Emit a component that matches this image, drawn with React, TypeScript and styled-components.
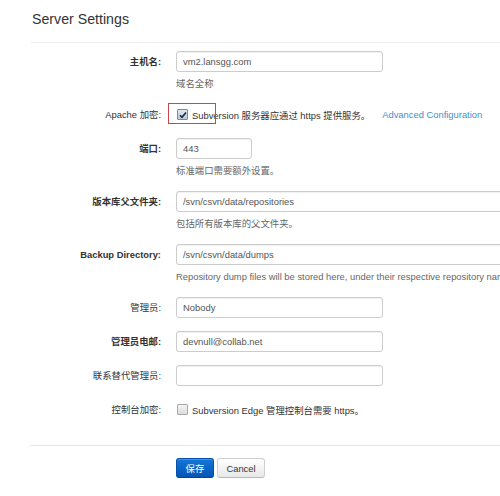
import React from "react";
import styled, { createGlobalStyle } from "styled-components";

const FONT = `"Liberation Sans", Arial, "Noto Sans CJK SC", sans-serif`;

const GlobalStyle = createGlobalStyle`
  html, body {
    margin: 0;
    padding: 0;
    background: #ffffff;
    overflow: hidden;
  }
  body {
    font-family: ${FONT};
    font-size: 9.4px;
    color: #333333;
  }
`;

interface LabelProps {
  $bold?: boolean;
}

interface InputProps {
  $width: number;
}

const Page = styled.div`
  position: relative;
  width: 760px;
  padding: 9px 0 0 31px;
`;

const Title = styled.h2`
  margin: 0 0 0 1px;
  height: 20px;
  line-height: 20px;
  font-size: 14.2px;
  font-weight: normal;
  color: #333333;
`;

const Fieldset = styled.div`
  margin-top: 13px;
  border-top: 1px solid #eeeeee;
  padding-top: 8px;
  display: flex;
  flex-direction: column;
  gap: 13px;
`;

const Group = styled.div`
  display: flex;
  align-items: flex-start;
`;

const Label = styled.label<LabelProps>`
  flex: 0 0 130px;
  height: 21px;
  line-height: 21px;
  text-align: right;
  white-space: nowrap;
  font-weight: ${(props) => (props.$bold ? "bold" : "normal")};
  color: #333333;
`;

const Controls = styled.div`
  margin-left: 15px;
  display: flex;
  flex-direction: column;
  gap: 4px;
`;

const TextInput = styled.input<InputProps>`
  box-sizing: border-box;
  width: ${(props) => props.$width}px;
  height: 21px;
  padding: 0 6px;
  border: 1px solid #cccccc;
  border-radius: 3px;
  box-shadow: inset 0 1px 1px rgba(0, 0, 0, 0.06);
  font-family: ${FONT};
  font-size: 9.4px;
  color: #555555;
  background: #ffffff;
  outline: none;
`;

const Help = styled.span`
  display: block;
  height: 15px;
  line-height: 15px;
  white-space: nowrap;
  color: #666666;
`;

const CheckRow = styled.div`
  display: flex;
  align-items: center;
  height: 21px;
  white-space: nowrap;
  color: #333333;
`;

const Box = styled.span<{ $checked?: boolean }>`
  box-sizing: border-box;
  display: inline-flex;
  align-items: center;
  justify-content: center;
  width: 11px;
  height: 11px;
  margin: 0 4px 0 1px;
  border: 1px solid ${(props) => (props.$checked ? "#7b8a9c" : "#a9a9a9")};
  border-radius: 1px;
  background: ${(props) =>
    props.$checked
      ? "linear-gradient(#dfe8f2, #b9c8da)"
      : "linear-gradient(#f4f4f4, #dcdcdc)"};
`;

const Link = styled.a`
  margin-left: 12px;
  color: #3f8fcd;
  text-decoration: none;
`;

const Marker = styled.div`
  position: absolute;
  left: 168px;
  top: 103px;
  width: 46px;
  height: 19px;
  border: 1px solid #c9474a;
  pointer-events: none;
`;

const Actions = styled.div`
  margin: 25px 0 0 -1px;
  border-top: 1px solid #e5e5e5;
  padding: 12px 0 0 146px;
  display: flex;
  gap: 3px;
`;

const Button = styled.button<{ $primary?: boolean }>`
  box-sizing: border-box;
  height: 20px;
  padding: 0;
  font-family: ${FONT};
  font-size: 9.4px;
  border-radius: 3px;
  cursor: pointer;
  width: ${(props) => (props.$primary ? 38 : 48)}px;
  color: ${(props) => (props.$primary ? "#ffffff" : "#333333")};
  border: 1px solid ${(props) => (props.$primary ? "#0651b0" : "#cfcfcf")};
  border-bottom-color: ${(props) => (props.$primary ? "#04439a" : "#b8b8b8")};
  background: ${(props) =>
    props.$primary
      ? "linear-gradient(#1277d6, #0554b6)"
      : "linear-gradient(#ffffff, #e8e8e8)"};
  box-shadow: inset 0 1px 0 rgba(255, 255, 255, 0.2);
`;

const Check = () => (
  <svg width="8" height="8" viewBox="0 0 8 8">
    <path d="M1 4.2 L3 6.3 L7 1.5" fill="none" stroke="#1d2a3a" strokeWidth="1.6" />
  </svg>
);

const App = (): React.JSX.Element => {
  return (
    <Page>
      <GlobalStyle />
      <Title>Server Settings</Title>
      <Fieldset>
        <Group>
          <Label $bold>主机名:</Label>
          <Controls>
            <TextInput $width={207} defaultValue="vm2.lansgg.com" />
            <Help>域名全称</Help>
          </Controls>
        </Group>
        <Group>
          <Label>Apache 加密:</Label>
          <Controls>
            <CheckRow>
              <Box $checked>
                <Check />
              </Box>
              Subversion 服务器应通过 https 提供服务。
              <Link href="#">Advanced Configuration</Link>
            </CheckRow>
          </Controls>
        </Group>
        <Group>
          <Label $bold>端口:</Label>
          <Controls>
            <TextInput $width={76} defaultValue="443" />
            <Help>标准端口需要额外设置。</Help>
          </Controls>
        </Group>
        <Group>
          <Label $bold>版本库父文件夹:</Label>
          <Controls>
            <TextInput $width={420} defaultValue="/svn/csvn/data/repositories" />
            <Help>包括所有版本库的父文件夹。</Help>
          </Controls>
        </Group>
        <Group>
          <Label $bold>Backup Directory:</Label>
          <Controls>
            <TextInput $width={420} defaultValue="/svn/csvn/data/dumps" />
            <Help>
              Repository dump files will be stored here, under their respective
              repository name.
            </Help>
          </Controls>
        </Group>
        <Group>
          <Label>管理员:</Label>
          <Controls>
            <TextInput $width={207} defaultValue="Nobody" />
          </Controls>
        </Group>
        <Group>
          <Label $bold>管理员电邮:</Label>
          <Controls>
            <TextInput $width={207} defaultValue="devnull@collab.net" />
          </Controls>
        </Group>
        <Group>
          <Label>联系替代管理员:</Label>
          <Controls>
            <TextInput $width={207} defaultValue="" />
          </Controls>
        </Group>
        <Group>
          <Label>控制台加密:</Label>
          <Controls>
            <CheckRow>
              <Box />
              Subversion Edge 管理控制台需要 https。
            </CheckRow>
          </Controls>
        </Group>
      </Fieldset>
      <Actions>
        <Button $primary>保存</Button>
        <Button>Cancel</Button>
      </Actions>
      <Marker />
    </Page>
  );
};

export default App;
